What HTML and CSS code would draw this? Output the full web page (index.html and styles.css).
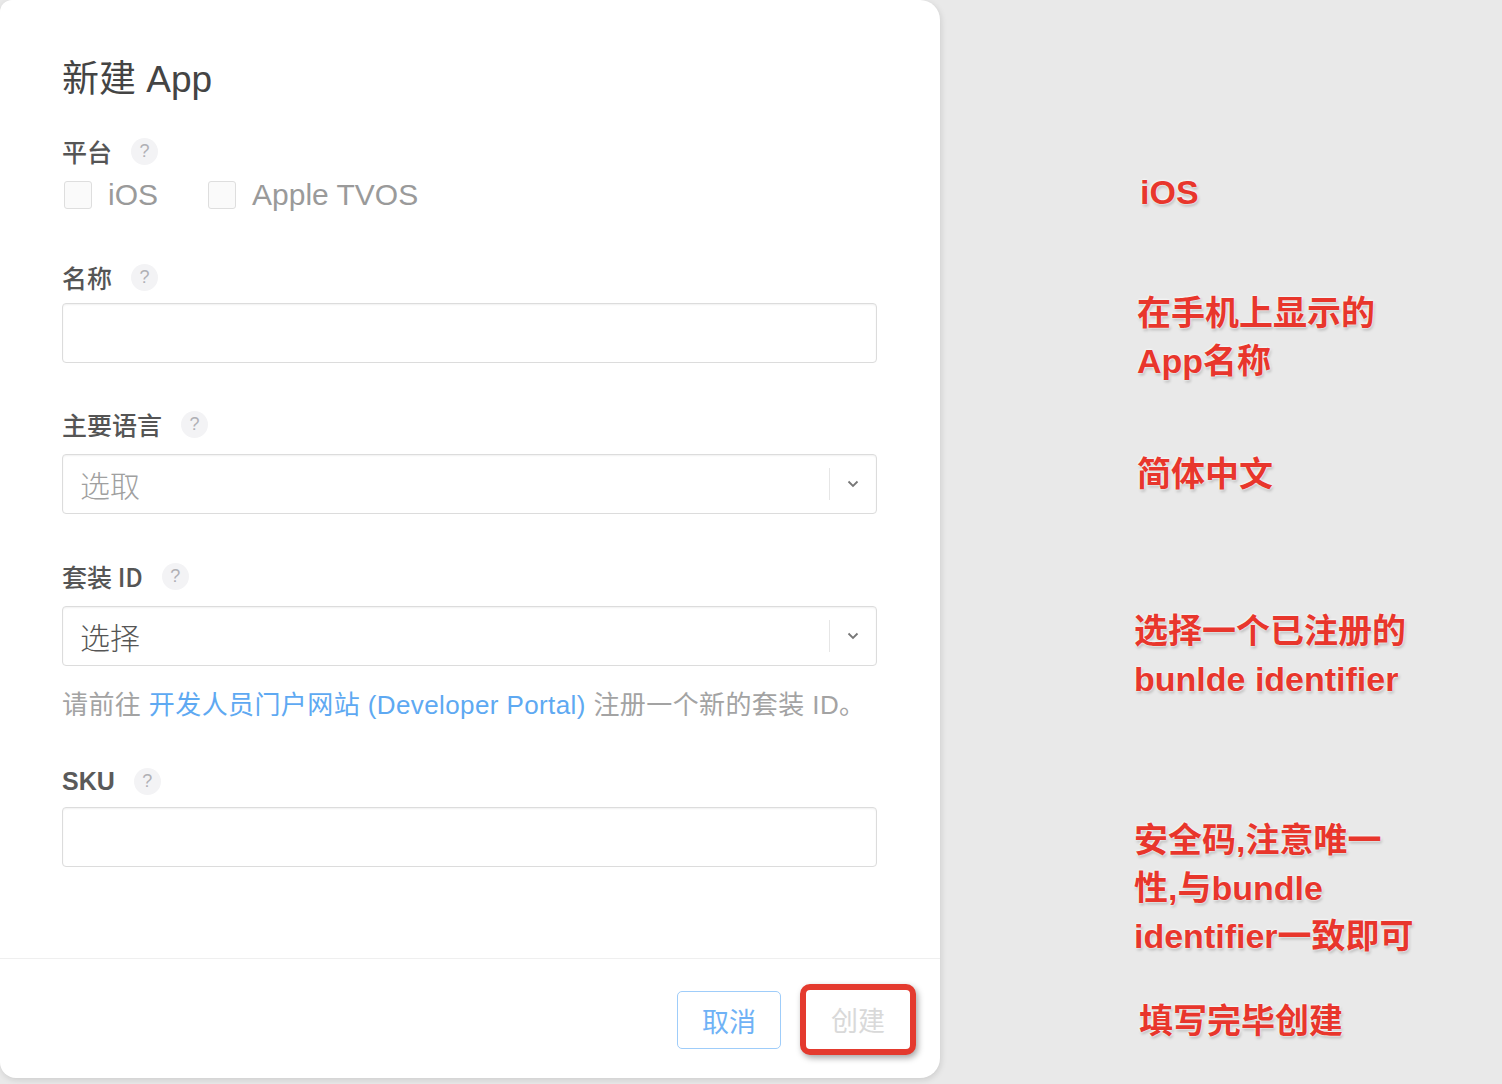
FILE: index.html
```html
<!DOCTYPE html>
<html lang="zh-CN">
<head>
<meta charset="utf-8">
<title>新建 App</title>
<link rel="stylesheet" href="styles.css">
</head>
<body>
<div class="page">
  <div class="panel">
    <div class="form">
      <h1 class="title">新建 App</h1>

      <div class="label label-platform">平台<span class="help">?</span></div>
      <div class="checks">
        <label class="check"><span class="box"></span><span class="check-text">iOS</span></label>
        <label class="check check-tv"><span class="box"></span><span class="check-text">Apple TVOS</span></label>
      </div>

      <div class="label label-name">名称<span class="help">?</span></div>
      <div class="input"></div>

      <div class="label label-lang">主要语言<span class="help">?</span></div>
      <div class="input select">
        <span class="placeholder">选取</span>
        <span class="sep"></span>
        <svg class="chev" width="12" height="8" viewBox="0 0 12 8"><polyline points="1.5,1.5 6,6 10.5,1.5" fill="none" stroke="#777" stroke-width="1.8"/></svg>
      </div>

      <div class="label label-bundle">套装 ID<span class="help">?</span></div>
      <div class="input select">
        <span class="placeholder value">选择</span>
        <span class="sep"></span>
        <svg class="chev" width="12" height="8" viewBox="0 0 12 8"><polyline points="1.5,1.5 6,6 10.5,1.5" fill="none" stroke="#777" stroke-width="1.8"/></svg>
      </div>
      <p class="hint">请前往 <a class="link">开发人员门户网站 (Developer Portal)</a> 注册一个新的套装 ID。</p>

      <div class="label label-sku">SKU<span class="help">?</span></div>
      <div class="input"></div>
    </div>
    <div class="footer">
      <button class="btn btn-cancel">取消</button>
      <button class="btn btn-create">创建</button>
    </div>
  </div>

  <div class="notes">
    <div class="note note-1">iOS</div>
    <div class="note note-2">在手机上显示的<br>App名称</div>
    <div class="note note-3">简体中文</div>
    <div class="note note-4">选择一个已注册的<br>bunlde identifier</div>
    <div class="note note-5">安全码,注意唯一<br>性,与bundle<br>identifier一致即可</div>
    <div class="note note-6">填写完毕创建</div>
  </div>
</div>
</body>
</html>
```

FILE: styles.css
```css
html, body {
  margin: 0;
  padding: 0;
  background: #e9e9e9;
}

body {
  font-family: "Liberation Sans", "Noto Sans CJK SC", sans-serif;
  width: 1502px;
  height: 1084px;
  overflow: hidden;
}

.page {
  display: flex;
  align-items: flex-start;
}

.panel {
  width: 940px;
  height: 1078px;
  background: #ffffff;
  border-radius: 12px 20px 20px 16px;
  box-shadow: 1px 2px 6px rgba(0, 0, 0, 0.12);
  display: flex;
  flex-direction: column;
  flex-shrink: 0;
}

.form {
  flex: 1;
  padding: 58px 63px 0 62px;
}

.title {
  margin: 0;
  font-family: "Liberation Sans", "Noto Sans CJK SC", sans-serif;
  font-size: 37px;
  line-height: 44px;
  font-weight: 400;
  color: #444;
}

.label {
  display: flex;
  align-items: center;
  height: 32px;
  font-family: "Noto Sans CJK SC", sans-serif;
  font-size: 25px;
  color: #555;
  font-weight: 500;
}

.label-sku {
  font-family: "Liberation Sans", "Noto Sans CJK SC", sans-serif;
  font-weight: 700;
  color: #5a5a5a;
}

.help {
  display: inline-flex;
  align-items: center;
  justify-content: center;
  width: 27px;
  height: 27px;
  margin-left: 19px;
  border-radius: 50%;
  background: #f3f3f5;
  color: #b0b0b5;
  font-family: "Liberation Sans", sans-serif;
  font-size: 18px;
  font-weight: 400;
}

.label-platform { margin-top: 33px; }
.label-name { margin-top: 51px; }
.label-lang { margin-top: 45px; }
.label-bundle { margin-top: 46px; }
.label-sku { margin-top: 44px; }

.checks {
  display: flex;
  align-items: center;
  height: 30px;
  margin-top: 13px;
  padding-left: 2px;
}

.check {
  display: flex;
  align-items: center;
}

.check-tv {
  margin-left: 50px;
}

.box {
  width: 26px;
  height: 26px;
  border: 1.5px solid #dedede;
  border-radius: 3px;
  background: #fafafa;
}

.check-text {
  margin-left: 16px;
  font-size: 30px;
  color: #9a9a9a;
  line-height: 30px;
}

.input {
  height: 58px;
  margin-top: 10px;
  border: 1.5px solid #dcdcdc;
  border-radius: 4px;
  box-shadow: inset 0 1px 2px rgba(0, 0, 0, 0.06);
  background: #fff;
}

.label-lang + .input,
.label-bundle + .input {
  margin-top: 14px;
}

.select {
  display: flex;
  align-items: center;
  padding-left: 17px;
  padding-right: 17px;
}

.placeholder {
  flex: 1;
  font-family: "Noto Sans CJK SC", sans-serif;
  font-size: 30px;
  color: #a0a0a0;
  font-weight: 300;
}

.placeholder.value {
  color: #555;
}

.sep {
  width: 1px;
  height: 32px;
  background: #e6e6e6;
  margin-right: 17px;
}

.chev {
  display: block;
}

.hint {
  margin: 23px 0 0 0;
  height: 32px;
  line-height: 32px;
  font-family: "Liberation Sans", "Noto Sans CJK SC", sans-serif;
  font-size: 26px;
  letter-spacing: 0.4px;
  color: #a3a3a3;
  white-space: nowrap;
}

.link {
  color: #5ea9f2;
}

.footer {
  height: 120px;
  border-top: 1px solid #efefef;
  display: flex;
  justify-content: flex-end;
  align-items: flex-start;
  gap: 19px;
  padding: 25px 24px 0 0;
  box-sizing: border-box;
}

.btn {
  font-family: "Noto Sans CJK SC", sans-serif;
  font-size: 27px;
  background: #fff;
  padding: 0;
  cursor: default;
}

.btn-cancel {
  margin-top: 7px;
  width: 104px;
  height: 58px;
  border: 1.5px solid #9fcdfa;
  border-radius: 5px;
  color: #6fb2f6;
}

.btn-create {
  width: 116px;
  height: 71px;
  border: 6px solid #e43a2e;
  border-radius: 10px;
  color: #d9d9d9;
  box-shadow: 2px 3px 6px rgba(0, 0, 0, 0.35);
}

.notes {
  display: flex;
  flex-direction: column;
  margin-left: 197px;
  padding-top: 168px;
}

.note {
  font-family: "Liberation Sans", "Noto Sans CJK SC", sans-serif;
  font-weight: 700;
  font-size: 34px;
  line-height: 48px;
  color: #e8362c;
  white-space: nowrap;
  text-shadow: 0 0 2px #fff, 0 0 3px #fff, 1px 2px 3px rgba(0, 0, 0, 0.25);
}

.note-1 { margin-left: 3px; }
.note-2 { margin-top: 73px; }
.note-3 { margin-top: 65px; }
.note-4 { margin-top: 109px; margin-left: -3px; }
.note-5 { margin-top: 113px; margin-left: -3px; }
.note-6 { margin-top: 37px; margin-left: 2px; }
```
